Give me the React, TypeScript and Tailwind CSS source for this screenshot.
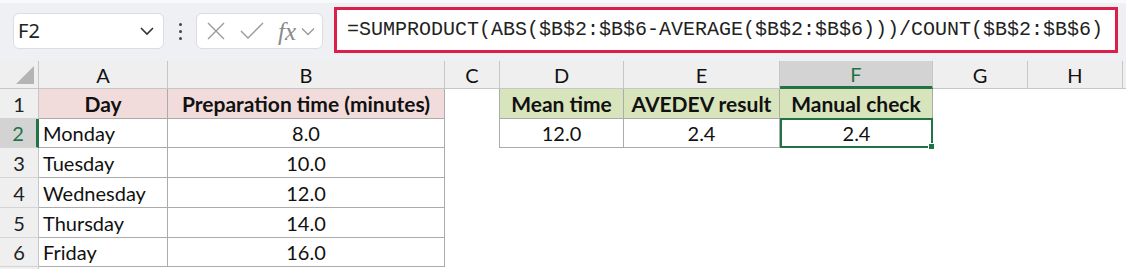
import React from "react";

const cols = ["A", "B", "C", "D", "E", "F", "G", "H"];
const tb = "border-[#ababab]";

const days = [
	["Monday", "8.0"],
	["Tuesday", "10.0"],
	["Wednesday", "12.0"],
	["Thursday", "14.0"],
	["Friday", "16.0"],
];

const RowHead = ({ n, active }: { n: number; active?: boolean }) => (
	<div
		className={`flex items-center justify-center text-[20px] border-b border-[#d4d4d4] ${
			active ? "bg-[#d3d3d3] text-[#217346] border-r-[3px] border-r-[#217346]" : "bg-[#efefef] text-[#222] border-r border-r-[#c6c6c6]"
		}`}
	>
		{n}
	</div>
);

const Blank = () => <div className="bg-white" />;

export default function App() {
	return (
		<div className="w-[1126px] h-[269px] overflow-hidden bg-white font-['Lato',sans-serif] text-[#111]">
			{/* formula bar */}
			<div className="h-[61px] bg-[#eef0f3] border-t-[3px] border-t-[#f8f9fa] flex items-start pt-[10px] pl-[13px]">
				<div className="w-[151px] h-[36px] bg-white rounded-[6px] border border-[#dadde1] flex items-center justify-between pl-[4px] pr-[8px]">
					<span className="font-['Noto_Sans',sans-serif] text-[20px] text-[#222]">F2</span>
					<svg width="16" height="10" viewBox="0 0 16 10">
						<path d="M2 2 L8 8 L14 2" fill="none" stroke="#333" strokeWidth="1.6" />
					</svg>
				</div>
				<div className="w-[32px] h-[36px] flex flex-col items-center justify-center gap-[4px]">
					<span className="w-[3px] h-[3px] bg-[#444] rounded-full" />
					<span className="w-[3px] h-[3px] bg-[#444] rounded-full" />
					<span className="w-[3px] h-[3px] bg-[#444] rounded-full" />
				</div>
				<div className="w-[127px] h-[36px] bg-white rounded-[6px] border border-[#dadde1] flex items-center pl-[9px] gap-[14px]">
					<svg width="20" height="20" viewBox="0 0 20 20">
						<path d="M2 2 L18 18 M18 2 L2 18" stroke="#9a9a9a" strokeWidth="1.4" />
					</svg>
					<svg width="24" height="18" viewBox="0 0 24 18">
						<path d="M1 9 L8 16 L23 1" fill="none" stroke="#9a9a9a" strokeWidth="1.4" />
					</svg>
					<div className="flex items-center gap-[5px]">
						<span className="font-['Liberation_Serif',serif] italic text-[25px] text-[#8a8a8a] leading-none">fx</span>
						<svg width="14" height="9" viewBox="0 0 14 9">
							<path d="M1 1.5 L7 7.5 L13 1.5" fill="none" stroke="#9a9a9a" strokeWidth="1.4" />
						</svg>
					</div>
				</div>
				<div className="ml-[11px] -mt-[6px] w-[784px] h-[46px] bg-white border-[3px] border-[#dc1e4a] flex items-center pl-[10px]">
					<span className="font-['Liberation_Mono',monospace] text-[20px] text-[#222] whitespace-nowrap">
						=SUMPRODUCT(ABS($B$2:$B$6-AVERAGE($B$2:$B$6)))/COUNT($B$2:$B$6)
					</span>
				</div>
			</div>

			{/* sheet */}
			<div className="grid grid-cols-[39px_129px_277px_55px_124px_156px_153px_95px_95px_1fr] grid-rows-[28px_30px_29px_30px_30px_30px_29px_1fr] h-[208px] text-[20px]">
				{/* corner */}
				<div className="bg-[#efefef] border-r border-b border-[#c6c6c6] flex items-end justify-end pr-[4px] pb-[4px]">
					<svg width="18" height="18" viewBox="0 0 18 18">
						<path d="M18 0 L18 18 L0 18 Z" fill="#b4b4b4" />
					</svg>
				</div>
				{cols.map((c) =>
					c === "F" ? (
						<div key={c} className="bg-[#d3d3d3] text-[#217346] border-r border-r-[#c6c6c6] border-b-[3px] border-b-[#217346] flex items-center justify-center">
							{c}
						</div>
					) : (
						<div key={c} className="bg-[#efefef] border-r border-b border-[#c6c6c6] flex items-center justify-center">
							{c}
						</div>
					)
				)}
				<div className="bg-[#efefef] border-b border-[#c6c6c6]" />

				{/* row 1 */}
				<RowHead n={1} />
				<div className={`bg-[#f2dcdb] border-r border-b ${tb} flex items-center justify-center font-bold text-[21px]`}>Day</div>
				<div className={`bg-[#f2dcdb] border-r border-b ${tb} flex items-center justify-center font-bold text-[21px] whitespace-nowrap`}>Preparation time (minutes)</div>
				<Blank />
				<div className={`bg-[#d8e4bc] border-l border-r border-b ${tb} flex items-center justify-center font-bold text-[21px] -ml-px whitespace-nowrap`}>Mean time</div>
				<div className={`bg-[#d8e4bc] border-r border-b ${tb} flex items-center justify-center font-bold text-[21px] whitespace-nowrap`}>AVEDEV result</div>
				<div className={`bg-[#d8e4bc] border-r ${tb} flex items-center justify-center font-bold text-[21px] whitespace-nowrap`}>Manual check</div>
				<Blank />
				<Blank />
				<Blank />

				{/* rows 2-6 */}
				{days.map(([d, v], i) => (
					<React.Fragment key={d}>
						<RowHead n={i + 2} active={i === 0} />
						<div className={`border-r border-b ${tb} flex items-center pl-[4px]`}>{d}</div>
						<div className={`border-r border-b ${tb} flex items-center justify-center`}>{v}</div>
						<Blank />
						{i === 0 ? (
							<>
								<div className={`border-l border-r border-b ${tb} flex items-center justify-center -ml-px`}>12.0</div>
								<div className={`border-r border-b ${tb} flex items-center justify-center`}>2.4</div>
								<div className="relative border-2 border-[#217346] flex items-center justify-center -mt-px">
									2.4
									<span className="absolute -right-[4px] -bottom-[4px] w-[7px] h-[7px] bg-[#217346] border border-white" />
								</div>
							</>
						) : (
							<>
								<Blank />
								<Blank />
								<Blank />
							</>
						)}
						<Blank />
						<Blank />
						<Blank />
					</React.Fragment>
				))}

				{/* row 7 */}
				<div className="bg-[#efefef] border-r border-[#c6c6c6]" />
			</div>
		</div>
	);
}
